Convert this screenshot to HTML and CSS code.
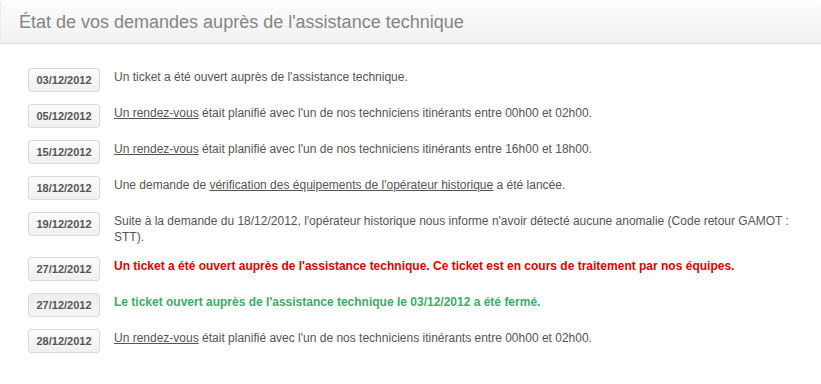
FILE: index.html
```html
<!DOCTYPE html>
<html lang="fr">
  <head>
    <meta charset="UTF-8" />
    <title>État de vos demandes</title>
    <link rel="stylesheet" href="styles.css">
  </head>
  <body>
    <div class="panel">
      <div class="panel-head">
        <h1>État de vos demandes auprès de l'assistance technique</h1>
      </div>

      <ul class="timeline">
        <li class="event">
          <span class="date">03/12/2012</span>
          <p>Un ticket a été ouvert auprès de l'assistance technique.</p>
        </li>
        <li class="event">
          <span class="date">05/12/2012</span>
          <p><a href="#">Un rendez-vous</a> était planifié avec l'un de nos techniciens itinérants entre 00h00 et 02h00.</p>
        </li>
        <li class="event">
          <span class="date">15/12/2012</span>
          <p><a href="#">Un rendez-vous</a> était planifié avec l'un de nos techniciens itinérants entre 16h00 et 18h00.</p>
        </li>
        <li class="event">
          <span class="date">18/12/2012</span>
          <p>Une demande de <a href="#">vérification des équipements de l'opérateur historique</a> a été lancée.</p>
        </li>
        <li class="event">
          <span class="date">19/12/2012</span>
          <p>Suite à la demande du 18/12/2012, l'opérateur historique nous informe n'avoir détecté aucune anomalie (Code retour GAMOT : STT).</p>
        </li>
        <li class="event">
          <span class="date">27/12/2012</span>
          <p class="alert">Un ticket a été ouvert auprès de l'assistance technique. Ce ticket est en cours de traitement par nos équipes.</p>
        </li>
        <li class="event">
          <span class="date active">27/12/2012</span>
          <p class="success">Le ticket ouvert auprès de l'assistance technique le 03/12/2012 a été fermé.</p>
        </li>
        <li class="event">
          <span class="date">28/12/2012</span>
          <p><a href="#">Un rendez-vous</a> était planifié avec l'un de nos techniciens itinérants entre 00h00 et 02h00.</p>
        </li>
      </ul>
    </div>
  </body>
</html>
```

FILE: styles.css
```css
body {
  margin: 0;
  background: #fff;
  font-family: "Liberation Sans", Arial, sans-serif;
  color: #555;
}

.panel-head {
  height: 43px;
  border-bottom: 1px solid #dcdcdc;
  border-radius: 4px 4px 0 0;
  background: linear-gradient(#fdfdfd, #f1f1f1);
  box-shadow: inset 1px 0 0 #ececec;
}

.panel-head h1 {
  margin: 0;
  padding: 11px 0 0 19px;
  font-size: 18px;
  font-weight: normal;
  line-height: 22px;
  color: #858585;
}

.timeline {
  list-style: none;
  margin: 0;
  padding: 24px 0 0 28px;
}

.event {
  display: flex;
  align-items: flex-start;
  gap: 14px;
  margin-bottom: 12px;
}

.date {
  flex: none;
  box-sizing: border-box;
  width: 72px;
  height: 24px;
  line-height: 22px;
  text-align: center;
  font-size: 11px;
  font-weight: bold;
  color: #555;
  border: 1px solid #dadada;
  border-radius: 3px;
  background: linear-gradient(#fbfbfb, #f0f0f0);
}

.date.active {
  background: linear-gradient(#eeeeee, #f4f4f4);
}

.event p {
  margin: 0;
  padding-top: 1px;
  font-size: 12px;
  line-height: 16px;
  max-width: 680px;
}

.event a {
  color: #555;
  text-decoration: underline;
}

.event p.alert {
  color: #e30000;
  font-weight: bold;
}

.event p.success {
  color: #3fa96a;
  font-weight: bold;
}
```
